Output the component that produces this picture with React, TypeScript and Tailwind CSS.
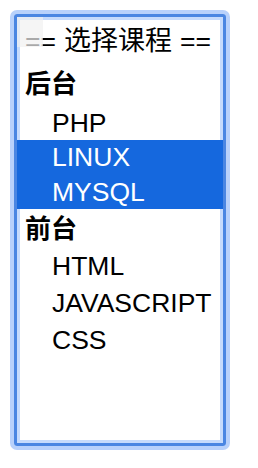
type Row = { label: string; kind: "group" | "option"; selected?: boolean; h: string };

const rows: Row[] = [
  { label: "后台", kind: "group", h: "h-[42.5px]" },
  { label: "PHP", kind: "option", h: "h-[34.5px]" },
  { label: "LINUX", kind: "option", selected: true, h: "h-[34.5px]" },
  { label: "MYSQL", kind: "option", selected: true, h: "h-[34.5px]" },
  { label: "前台", kind: "group", h: "h-[39px]" },
  { label: "HTML", kind: "option", h: "h-[37px]" },
  { label: "JAVASCRIPT", kind: "option", h: "h-[37px]" },
  { label: "CSS", kind: "option", h: "h-[37px]" },
];

function CourseRow({ row }: { row: Row }) {
  if (row.kind === "group") {
    return (
      <div className={`${row.h} flex items-center pl-[8px] text-[26px] font-bold text-black`}>
        {row.label}
      </div>
    );
  }
  return (
    <div
      className={`${row.h} flex items-center pl-[35px] ${
        row.selected ? "bg-[#1568de] text-white" : "text-black"
      }`}
    >
      {row.label}
    </div>
  );
}

export default function App() {
  return (
    <div className="min-h-[468px] w-[258px] bg-white pl-[10px] pt-[10px]">
      {/* focus ring + select border */}
      <div className="w-[220px] h-[440px] rounded-[7px] border-[4px] border-[#b8d1fb]">
        <div className="h-full rounded-[3px] border-[3px] border-[#4a86e2]">
          <div className="relative h-full overflow-hidden bg-white shadow-[inset_3px_3px_0_#c6dbfc,inset_-3px_-3px_0_#c6dbfc] font-['Liberation_Sans','Noto_Sans_CJK_SC',sans-serif] text-[26.5px] leading-none">
            {/* disabled placeholder option */}
            <div className="h-[46px] flex items-center pl-[8px] pt-[3px] text-black whitespace-nowrap">
              <span>==</span>
              <span className="ml-[8px] text-[27px]">选择课程</span>
              <span className="ml-[8px]">==</span>
            </div>
            {rows.map((row) => (
              <CourseRow key={row.label} row={row} />
            ))}
            {/* faded corner over the first option */}
            <div className="absolute left-0 top-0 w-[26px] h-[30px] bg-[#f1f1f1]/70" />
          </div>
        </div>
      </div>
    </div>
  );
}
